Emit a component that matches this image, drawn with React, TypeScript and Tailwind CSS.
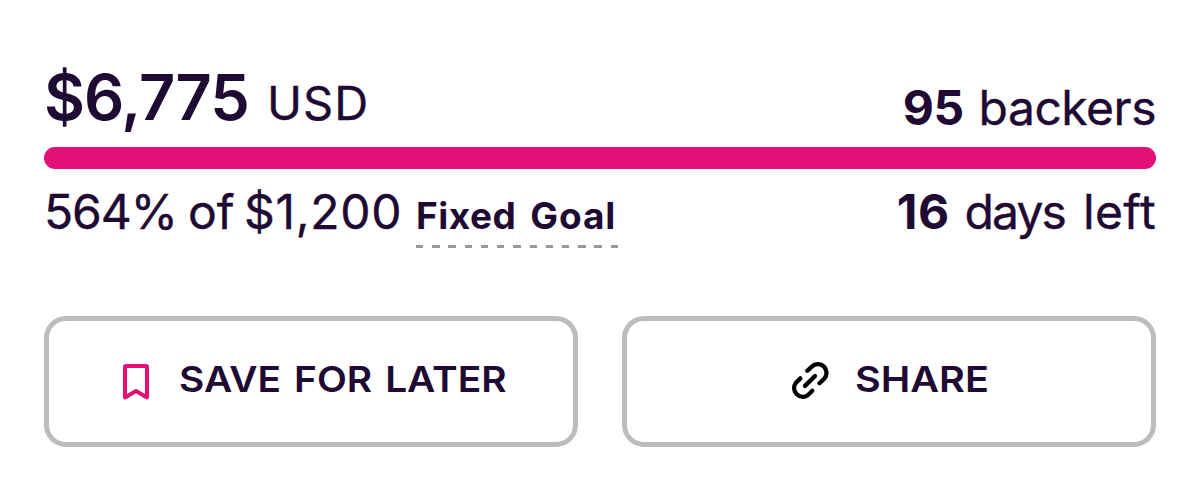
import React from "react";

function BookmarkIcon() {
  return (
    <svg className="h-[36px] w-[28px] shrink-0" viewBox="0 0 28 36" fill="none" stroke="#e51075" strokeWidth="4" strokeLinejoin="round">
      <path d="M4 2H24a1 1 0 0 1 1 1V33.5L14 27L3 33.5V3a1 1 0 0 1 1-1Z" />
    </svg>
  );
}

function LinkIcon() {
  return (
    <svg className="mb-[2px] h-[38px] w-[38px] shrink-0" viewBox="0 0 38 38" fill="none" stroke="#000" strokeWidth="4.3" strokeLinecap="round">
      <path d="M16.3 8.8L20.8 4.6A8.7 8.7 0 0 1 33.2 16.8L28.5 21.3" />
      <path d="M9.4 16.4L4.9 20.8A8.7 8.7 0 0 0 16.8 33.2L21.3 28.8" />
      <path d="M14 23.9L24 14" />
    </svg>
  );
}

export default function App() {
  return (
    <main className="flex h-[485px] w-[1200px] flex-col bg-white px-[44px] pt-[61px] font-['Inter',sans-serif] text-[#1f0a33]">
      <div className="flex h-[86px] items-start justify-between whitespace-nowrap">
        <p className="flex items-baseline leading-[72px]">
          <span className="w-[223px] text-[63px] font-semibold tracking-[-1px]">$6,775</span>
          <span className="text-[47px] tracking-[1px] [-webkit-text-stroke:0.4px]">USD</span>
        </p>
        <p className="mt-[19px] flex items-baseline gap-[15px] text-[48px] leading-[56px]">
          <span className="font-bold tracking-[-0.5px]">95</span>
          <span className="tracking-[-0.5px] [-webkit-text-stroke:0.4px]">backers</span>
        </p>
      </div>
      <div className="h-[22px] rounded-full bg-[#e51075]" />
      <div className="flex h-[147px] items-start justify-between pt-[15px] text-[48px] leading-[56px] whitespace-nowrap">
        <p className="flex items-baseline">
          <span className="w-[144px] tracking-[-1.1px] [-webkit-text-stroke:0.4px]">564%</span>
          <span className="w-[56px] [-webkit-text-stroke:0.4px]">of</span>
          <span className="w-[172px] tracking-[0.7px] [-webkit-text-stroke:0.4px]">$1,200</span>
          <span className="flex h-[55px] w-[202px] gap-[14px] bg-[repeating-linear-gradient(90deg,#999_0px,#999_7.4px,transparent_7.4px,transparent_16.22px)] bg-[length:100%_3px] bg-bottom bg-no-repeat text-[37px] leading-[46px] font-bold">
            <span className="tracking-[0.5px]">Fixed</span>
            <span className="tracking-[0.9px]">Goal</span>
          </span>
        </p>
        <p className="flex items-baseline">
          <span className="mr-[15px] font-bold tracking-[0.5px]">16</span>
          <span className="mr-[18px] tracking-[-1.9px] [-webkit-text-stroke:0.4px]">days</span>
          <span className="tracking-[0.4px] [-webkit-text-stroke:0.4px]">left</span>
        </p>
      </div>
      <div className="flex gap-[44px] text-[36px] leading-[44px] font-semibold whitespace-nowrap">
        <button className="flex h-[131px] w-[534px] items-center rounded-[22px] border-[5px] border-[#bdbdbd] pl-[73px]">
          <BookmarkIcon />
          <span className="mb-[5px] ml-[29px] flex origin-left scale-x-[1.08] gap-[12px]">
            <span>SAVE</span>
            <span>FOR</span>
            <span>LATER</span>
          </span>
        </button>
        <button className="flex h-[131px] w-[534px] items-center rounded-[22px] border-[5px] border-[#bdbdbd] pl-[164px]">
          <LinkIcon />
          <span className="mb-[5px] ml-[26px] origin-left scale-x-[1.1]">SHARE</span>
        </button>
      </div>
    </main>
  );
}
